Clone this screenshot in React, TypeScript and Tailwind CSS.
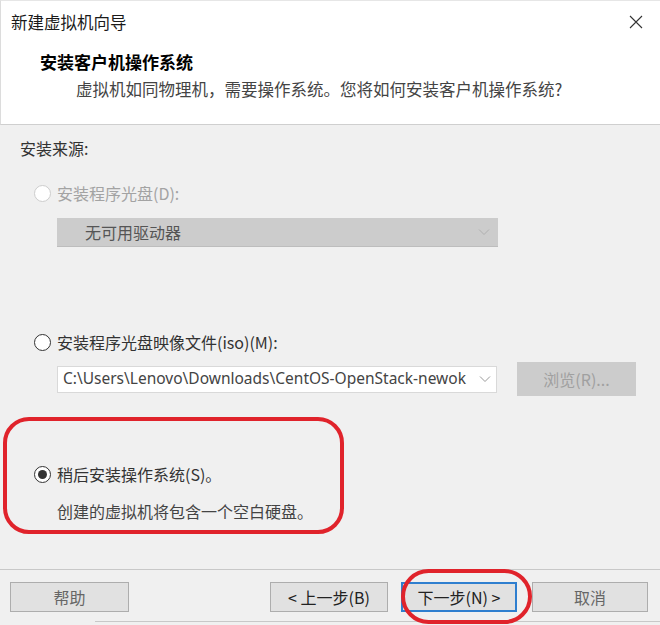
import React from 'react';

const cjk = { fontFamily: '"Noto Sans CJK SC", "Noto Sans", sans-serif' };
const latin = { fontFamily: '"Noto Sans", "Noto Sans CJK SC", sans-serif' };

function Radio({ state }: { state: 'disabled' | 'off' | 'on' }) {
  if (state === 'disabled') {
    return <span className="w-[17px] h-[17px] rounded-full border border-[#cdcdcd] bg-white shrink-0" />;
  }
  return (
    <span className="w-[17px] h-[17px] rounded-full border-[1.5px] border-[#333333] bg-white shrink-0 flex items-center justify-center">
      {state === 'on' && <span className="w-[9px] h-[9px] rounded-full bg-[#333333]" />}
    </span>
  );
}

function Chevron({ color }: { color: string }) {
  return (
    <svg width="12" height="8" viewBox="0 0 12 8" fill="none" stroke={color} strokeWidth="1">
      <path d="M1 1.5l5 5 5-5" />
    </svg>
  );
}

function Button({ label, width, active, muted }: { label: string; width: string; active?: boolean; muted?: boolean }) {
  return (
    <div
      className={`${width} h-[30px] flex items-center justify-center bg-[#e1e1e1] text-[16px] ${
        active ? 'border-2 border-[#2f7fcf]' : 'border border-[#adadad]'
      } ${muted ? 'text-[#666666]' : 'text-[#222222]'}`}
      style={cjk}
    >
      {label}
    </div>
  );
}

export default function App() {
  return (
    <div className="relative w-[660px] h-[625px] overflow-hidden bg-[#f0f0f0] flex flex-col" style={cjk}>
      {/* header */}
      <div className="h-[125px] bg-white border-b border-[#cfcfcf] border-t border-t-[#e6e6e6] border-l border-l-[#dcdcdc] flex flex-col">
        <div className="h-[42px] flex items-center justify-between pl-[10px] pr-[17px]">
          <span className="text-[16.5px] text-[#1a1a1a]">新建虚拟机向导</span>
          <svg width="14" height="14" viewBox="0 0 14 14" stroke="#333333" strokeWidth="1.1">
            <path d="M1 1l12 12M13 1L1 13" />
          </svg>
        </div>
        <div className="mt-[7px] pl-[39px] h-[24px] leading-[24px] text-[17px] font-bold text-black">安装客户机操作系统</div>
        <div className="mt-[3px] pl-[75px] h-[24px] leading-[24px] text-[16.5px] text-[#444444]">
          虚拟机如同物理机，需要操作系统。您将如何安装客户机操作系统?
        </div>
      </div>

      {/* body */}
      <div className="flex flex-col pl-[20px]">
        <div className="mt-[11px] h-[24px] leading-[24px] text-[16px] text-[#333333]">安装来源:</div>

        <div className="mt-[21px] h-[24px] flex items-center pl-[14px] gap-[6px]">
          <Radio state="disabled" />
          <span className="text-[16px] text-[#a3a3a3]">安装程序光盘(D):</span>
        </div>

        <div className="mt-[13px] ml-[37px] w-[441px] h-[29px] bg-[#cccccc] border-b border-[#bdbdbd] flex items-center justify-between pl-[28px] pr-[8px]">
          <span className="text-[16px] text-[#555555]">无可用驱动器</span>
          <Chevron color="#b0b0b0" />
        </div>

        <div className="mt-[83px] h-[24px] flex items-center pl-[14px] gap-[6px]">
          <Radio state="off" />
          <span className="text-[16px] text-[#333333]">安装程序光盘映像文件(iso)(M):</span>
        </div>

        <div className="mt-[8px] h-[34px] flex items-center">
          <div className="ml-[37px] w-[440px] h-[27px] bg-white border border-[#d9d9d9] flex items-center">
            <span className="flex-1 whitespace-nowrap pl-[5px] text-[15.5px] text-[#444444]" style={latin}>
              C:\Users\Lenovo\Downloads\CentOS-OpenStack-newok
            </span>
            <span className="w-[22px] h-full flex items-center justify-center bg-white shrink-0">
              <Chevron color="#9a9a9a" />
            </span>
          </div>
          <div className="ml-[20px] w-[119px] h-[34px] bg-[#cccccc] flex items-center justify-center text-[16px] text-[#a0a0a0]">
            浏览(R)...
          </div>
        </div>

        <div className="mt-[66px] h-[24px] flex items-center pl-[14px] gap-[6px]">
          <Radio state="on" />
          <span className="text-[16px] text-[#333333]">稍后安装操作系统(S)。</span>
        </div>
        <div className="mt-[13px] pl-[37px] h-[24px] leading-[24px] text-[16px] text-[#444444]">
          创建的虚拟机将包含一个空白硬盘。
        </div>
      </div>

      {/* footer */}
      <div className="mt-[46px] border-t border-[#c8c8c8]" />
      <div className="mt-[12px] flex items-center pl-[10px] pr-[12px]">
        <Button label="帮助" width="w-[119px]" muted />
        <div className="ml-auto flex items-center">
          <Button label="< 上一步(B)" width="w-[118px]" />
          <div className="ml-[13px]">
            <Button label="下一步(N) >" width="w-[116px]" active />
          </div>
          <div className="ml-[15px]">
            <Button label="取消" width="w-[116px]" muted />
          </div>
        </div>
      </div>
      <div className="mt-[9px] ml-[95px] border-t border-[#c8c8c8]" />

      {/* red annotations */}
      <div className="absolute left-[3px] top-[417px] w-[341px] h-[117px] border-4 border-[#e0232b] rounded-[26px]" />
      <div className="absolute left-[401px] top-[569px] w-[131px] h-[55px] border-4 border-[#e0232b] rounded-[28px]" />
    </div>
  );
}
